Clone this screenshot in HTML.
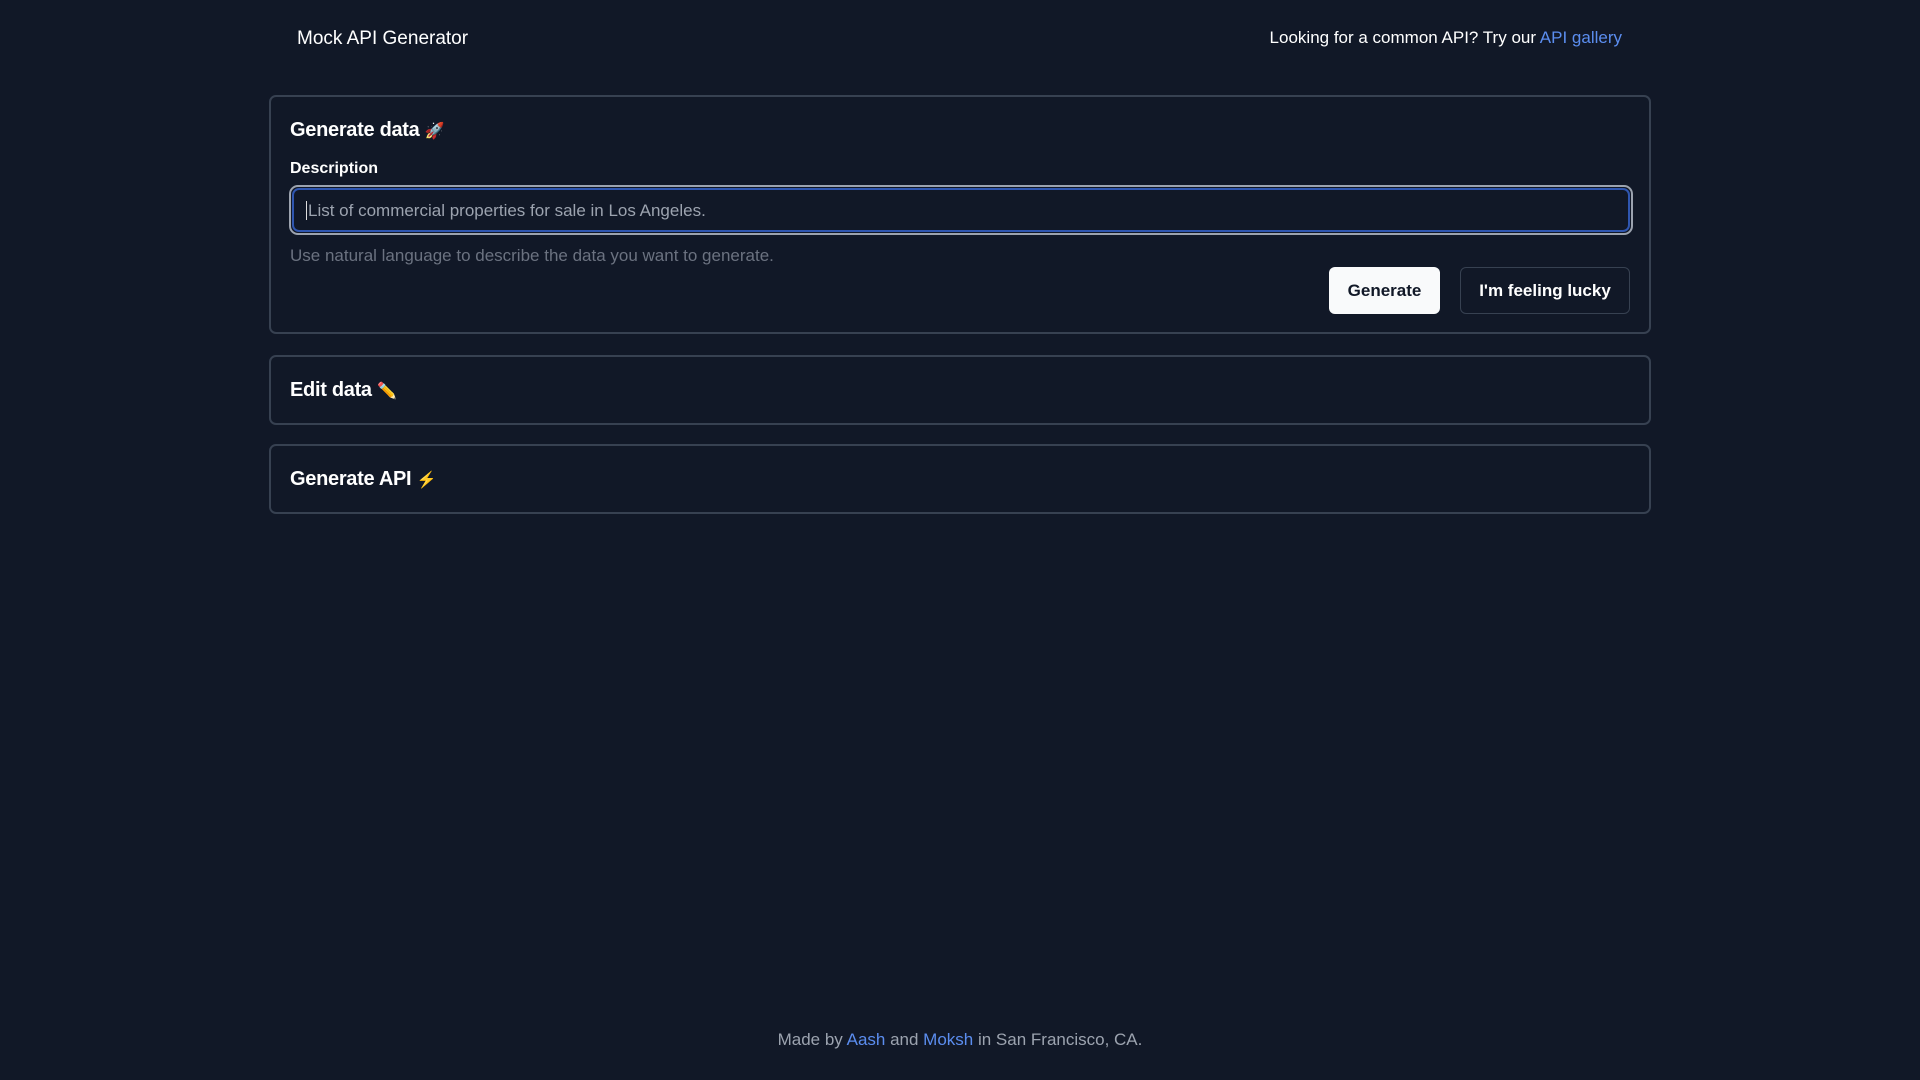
<!DOCTYPE html>
<html><head><meta charset="utf-8"><style>
*{box-sizing:border-box;margin:0;padding:0}
body{width:1920px;height:1080px;background:#111827;font-family:"Liberation Sans","Noto Sans CJK SC",sans-serif;color:#fff;position:relative;overflow:hidden}
.abs{position:absolute}
.card{position:absolute;left:269px;width:1382px;border:2px solid #374151;border-radius:7px}
h2{font-size:20px;font-weight:bold;position:absolute;left:19px;letter-spacing:-0.3px}
h2 span{font-size:16px}
a{color:#5b8def;text-decoration:none}
</style></head><body>
<div class="abs" style="left:297px;top:28px;font-size:19px">Mock API Generator</div>
<div class="abs" style="right:298px;top:28px;font-size:17px">Looking for a common API? Try our <a>API gallery</a></div>

<div class="card" style="top:95px;height:239px">
 <h2 style="top:22px">Generate data <span>🚀</span></h2>
 <div class="abs" style="left:19px;top:63px;font-size:16px;font-weight:bold">Description</div>
 <div class="abs" style="left:18px;top:88px;width:1344px;height:50px;border:2px solid #9ca3af;border-radius:9px;padding:1px">
  <div style="width:100%;height:100%;border:2px solid #2f56b0;border-radius:7px;position:relative">
   <div class="abs" style="left:12px;top:11px;font-size:17px;color:#9ca3af"><span style="border-left:1px solid #ddd;margin-right:1px"></span>List of commercial properties for sale in Los Angeles.</div>
  </div>
 </div>
 <div class="abs" style="left:19px;top:149px;font-size:17px;color:#6b7280">Use natural language to describe the data you want to generate.</div>
 <div class="abs" style="left:1058px;top:170px;width:111px;height:47px;background:#f9fafb;border-radius:6px;color:#111827;font-size:17px;font-weight:bold;text-align:center;line-height:47px">Generate</div>
 <div class="abs" style="left:1189px;top:170px;width:170px;height:47px;border:1px solid #374151;border-radius:6px;font-size:17px;font-weight:bold;text-align:center;line-height:45px">I'm feeling lucky</div>
</div>

<div class="card" style="top:355px;height:70px">
 <h2 style="top:22px">Edit data <span>✏️</span></h2>
</div>
<div class="card" style="top:444px;height:70px">
 <h2 style="top:22px">Generate API <span>⚡</span></h2>
</div>

<div class="abs" style="left:0;width:1920px;text-align:center;top:1030px;font-size:17px;color:#9ca3af">Made by <a>Aash</a> and <a>Moksh</a> in San Francisco, CA.</div>
</body></html>
